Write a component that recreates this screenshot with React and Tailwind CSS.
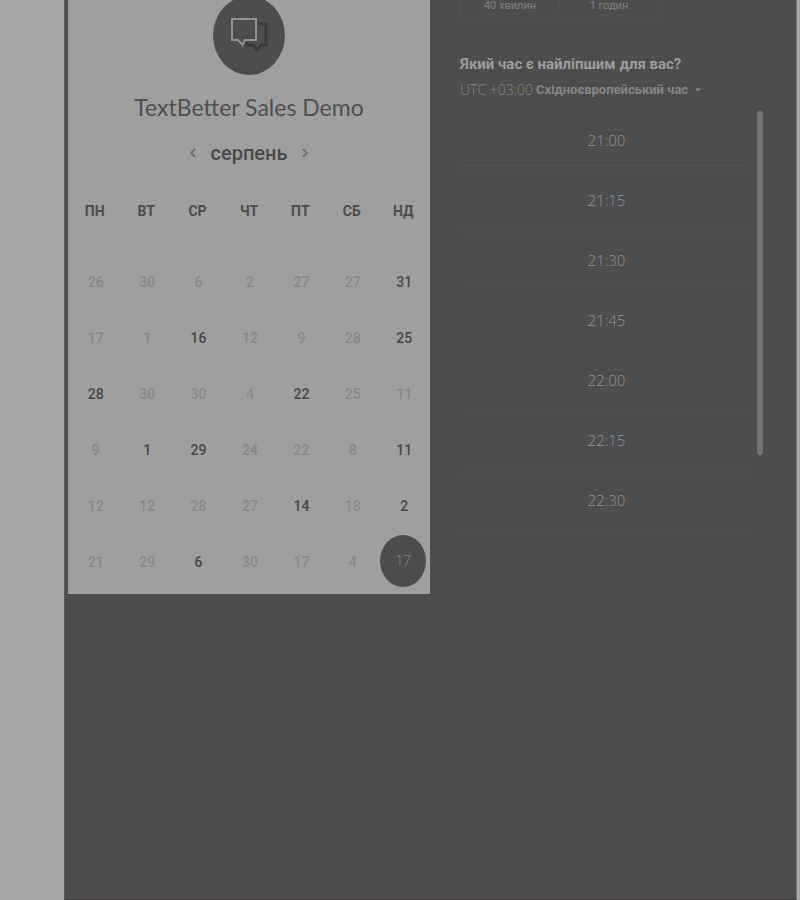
import { useState } from "react";

const WEEKDAYS = ["ПН", "ВТ", "СР", "ЧТ", "ПТ", "СБ", "НД"];

const WEEKS = [
  [26, 30, 6, 2, 27, 27, 31],
  [17, 1, 16, 12, 9, 28, 25],
  [28, 30, 30, 4, 22, 25, 11],
  [9, 1, 29, 24, 22, 8, 11],
  [12, 12, 28, 27, 14, 18, 2],
  [21, 29, 6, 30, 17, 4, 17],
];

const AVAILABLE = ["0-6", "1-2", "1-6", "2-0", "2-4", "3-1", "3-2", "3-6", "4-4", "4-6", "5-2"];
const SELECTED = "5-6";

const SLOTS = [
  { time: "21:00", border: "border-t-transparent border-b-[#545454]" },
  { time: "21:15", border: "border-y-[#505050]" },
  { time: "21:30", border: "border-y-[#4e4e4e]" },
  { time: "21:45", border: "border-y-transparent" },
  { time: "22:00", border: "border-y-transparent" },
  { time: "22:15", border: "border-y-[#4e4e4e]" },
  { time: "22:30", border: "border-t-[#515151] border-b-transparent" },
];

const DURATIONS = ["40 хвилин", "1 годин"];

function Logo() {
  return (
    <div className="-mt-1 flex h-[79px] w-[72px] justify-center rounded-[50%] bg-[#4d4d4d] pt-5">
      <svg width="38" height="36" viewBox="0 0 38 36" fill="none" aria-hidden="true">
        <path
          d="M29 8H36V29H31L27 34L23 29H16V25"
          stroke="#3a3a3a"
          strokeWidth="3"
        />
        <path d="M2 3H26V24H15L12.500 29L8 24H2Z" fill="#4d4d4d" stroke="#919191" strokeWidth="2" />
      </svg>
    </div>
  );
}

function Chevron({ d }) {
  return (
    <svg width="8" height="12" viewBox="0 0 8 12" fill="none" stroke="#707070" strokeWidth="2" aria-hidden="true">
      <path d={d} />
    </svg>
  );
}

function Day({ id, value }) {
  if (id === SELECTED) {
    return (
      <button
        type="button"
        aria-pressed="true"
        className="h-[52px] w-[46px] rounded-[50%] bg-[#4d4d4d] pb-px font-light text-[#858585]"
      >
        {value}
      </button>
    );
  }
  if (AVAILABLE.includes(id)) {
    return (
      <button type="button" className="h-12 w-11 pt-0.5 pl-0.5 font-medium text-[#484848]">
        {value}
      </button>
    );
  }
  return (
    <button type="button" disabled className="h-12 w-11 pt-0.5 pl-0.5 font-medium text-[#888888]">
      {value}
    </button>
  );
}

function Calendar() {
  return (
    <section className="flex w-[362px] shrink-0 flex-col items-center self-start bg-[#9f9f9f] px-px pb-[5px]">
      <Logo />
      <h1 className="mt-4 font-['Lato','Liberation_Sans',sans-serif] text-[23px] leading-8 text-[#4f4f4f]">
        TextBetter Sales Demo
      </h1>
      <div className="mt-4 flex h-7 items-center gap-3.5">
        <button type="button" aria-label="Попередній місяць">
          <Chevron d="M6 2L2 6L6 10" />
        </button>
        <h2 className="font-['Roboto','Liberation_Sans',sans-serif] text-[20px] leading-7 font-medium text-[#4a4a4a]">
          серпень
        </h2>
        <button type="button" aria-label="Наступний місяць">
          <Chevron d="M2 2L6 6L2 10" />
        </button>
      </div>
      <table className="mt-8 w-full table-fixed font-['Roboto','Liberation_Sans',sans-serif] text-[14px] leading-5">
        <thead>
          <tr className="h-[54px]">
            {WEEKDAYS.map((d) => (
              <th key={d} scope="col" className="p-0 pt-0.5 text-center align-top font-bold text-[#4c4c4c]">
                {d}
              </th>
            ))}
          </tr>
        </thead>
        <tbody>
          {WEEKS.map((week, r) => (
            <tr key={r} className="h-14">
              {week.map((value, c) => (
                <td key={c} className="p-0 text-center align-middle">
                  <div className="flex justify-center">
                    <Day id={`${r}-${c}`} value={value} />
                  </div>
                </td>
              ))}
            </tr>
          ))}
        </tbody>
      </table>
    </section>
  );
}

function TimePicker() {
  const [duration, setDuration] = useState(null);
  return (
    <section className="flex min-w-0 flex-1 flex-col pr-[33px] pl-[30px] font-['Liberation_Sans',sans-serif]">
      <fieldset className="flex h-5 w-[199px] border border-t-0 border-[#535353] text-[11px] leading-3 text-[#808080]">
        {DURATIONS.map((label) => (
          <label
            key={label}
            className="flex flex-1 items-start justify-center border-r border-[#525252] last:border-r-0"
          >
            <input
              type="radio"
              name="duration"
              className="sr-only"
              checked={duration === label}
              onChange={() => setDuration(label)}
            />
            <span className="font-['Roboto','Liberation_Sans',sans-serif]">{label}</span>
          </label>
        ))}
      </fieldset>
      <h2 className="mt-8 font-['Roboto','Liberation_Sans',sans-serif] text-[15px] leading-6 font-bold text-[#9c9c9c]">
        Який час є найліпшим для вас?
      </h2>
      <button
        type="button"
        className="mt-1 flex h-5 items-center gap-[3px] self-start leading-5 whitespace-nowrap text-[#858585]"
      >
        <span className="font-['Open_Sans','Noto_Sans',sans-serif] text-[14px] font-light">UTC +03:00</span>
        <span className="font-['Roboto','Liberation_Sans',sans-serif] text-[13px] font-bold">
          Східноєвропейський час
        </span>
        <svg width="6" height="4" viewBox="0 0 6 4" fill="#858585" className="ml-1" aria-hidden="true">
          <path d="M0 0.500H6L3 3.500Z" />
        </svg>
      </button>
      <div className="mt-[11px] flex items-start">
        <ul className="flex flex-1 flex-col gap-[9px] pt-1">
          {SLOTS.map(({ time, border }) => (
            <li key={time} className="flex pr-1.5 pl-0.5">
              <button
                type="button"
                className={`h-[51px] w-full border border-x-transparent pb-0.5 font-['Open_Sans','Noto_Sans',sans-serif] text-[15px] leading-5 font-light text-[#929292] ${border}`}
              >
                {time}
              </button>
            </li>
          ))}
          <li aria-hidden="true" className="mr-1.5 ml-0.5 h-px bg-[#515151]" />
        </ul>
        <div className="h-[344px] w-1.5 rounded-full bg-[#757575]" />
      </div>
    </section>
  );
}

export default function App() {
  return (
    <div className="flex min-h-screen overflow-hidden bg-[#a6a6a6]">
      <div className="w-16 shrink-0" />
      <main className="mr-[3px] flex flex-1 items-start border-r border-b border-l border-r-[#777777] border-b-[#443f42] border-l-[#5c5c5c] bg-[#4d4d4d] pl-[3px]">
        <Calendar />
        <TimePicker />
      </main>
    </div>
  );
}
